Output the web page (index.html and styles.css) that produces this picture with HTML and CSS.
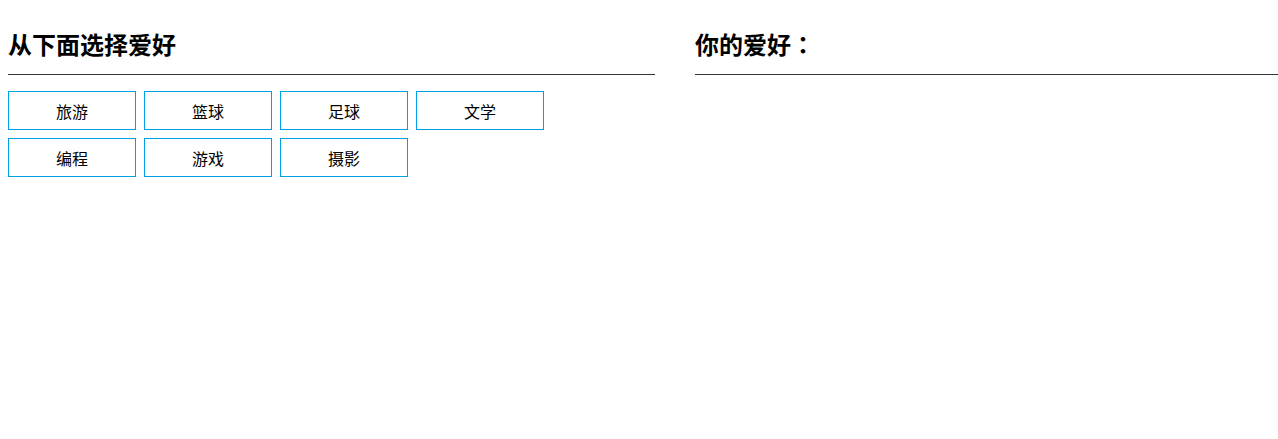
FILE: index.html
```html
<!DOCTYPE html>
<html>
<head>
<meta charset="utf-8">
<link rel="stylesheet" href="styles.css">
</head>
<body>
<div class="wrap">
  <section class="col left">
    <h2 class="title">从下面选择爱好</h2>
    <div class="tags">
      <div class="tag">旅游</div>
      <div class="tag">篮球</div>
      <div class="tag">足球</div>
      <div class="tag">文学</div>
      <div class="tag">编程</div>
      <div class="tag">游戏</div>
      <div class="tag">摄影</div>
    </div>
  </section>
  <section class="col right">
    <h2 class="title">你的爱好<span class="colon">：</span></h2>
  </section>
</div>
</body>
</html>
```
FILE: styles.css
```css
html, body { margin: 0; padding: 0; background: #fff; }
body {
  font-family: "Noto Sans CJK SC", "Liberation Sans", sans-serif;
  color: #000;
  padding: 8px 0 0 8px;
  overflow: hidden;
}
.wrap { display: flex; gap: 40px; }
.left { width: 647px; flex: none; }
.right { width: 583px; flex: none; }
.title {
  margin: 20px 0 0;
  font-size: 24px;
  line-height: 32px;
  font-weight: bold;
  padding-bottom: 14px;
  border-bottom: 1px solid #333;
}
.colon { font-family: "Noto Sans CJK TC", sans-serif; }
.tags {
  margin-top: 16px;
  display: flex;
  flex-wrap: wrap;
  gap: 8px;
  width: 544px;
}
.tag {
  box-sizing: border-box;
  width: 128px;
  height: 39px;
  border: 1px solid #00a0e9;
  display: flex;
  align-items: center;
  justify-content: center;
  font-size: 16px;
}
```
